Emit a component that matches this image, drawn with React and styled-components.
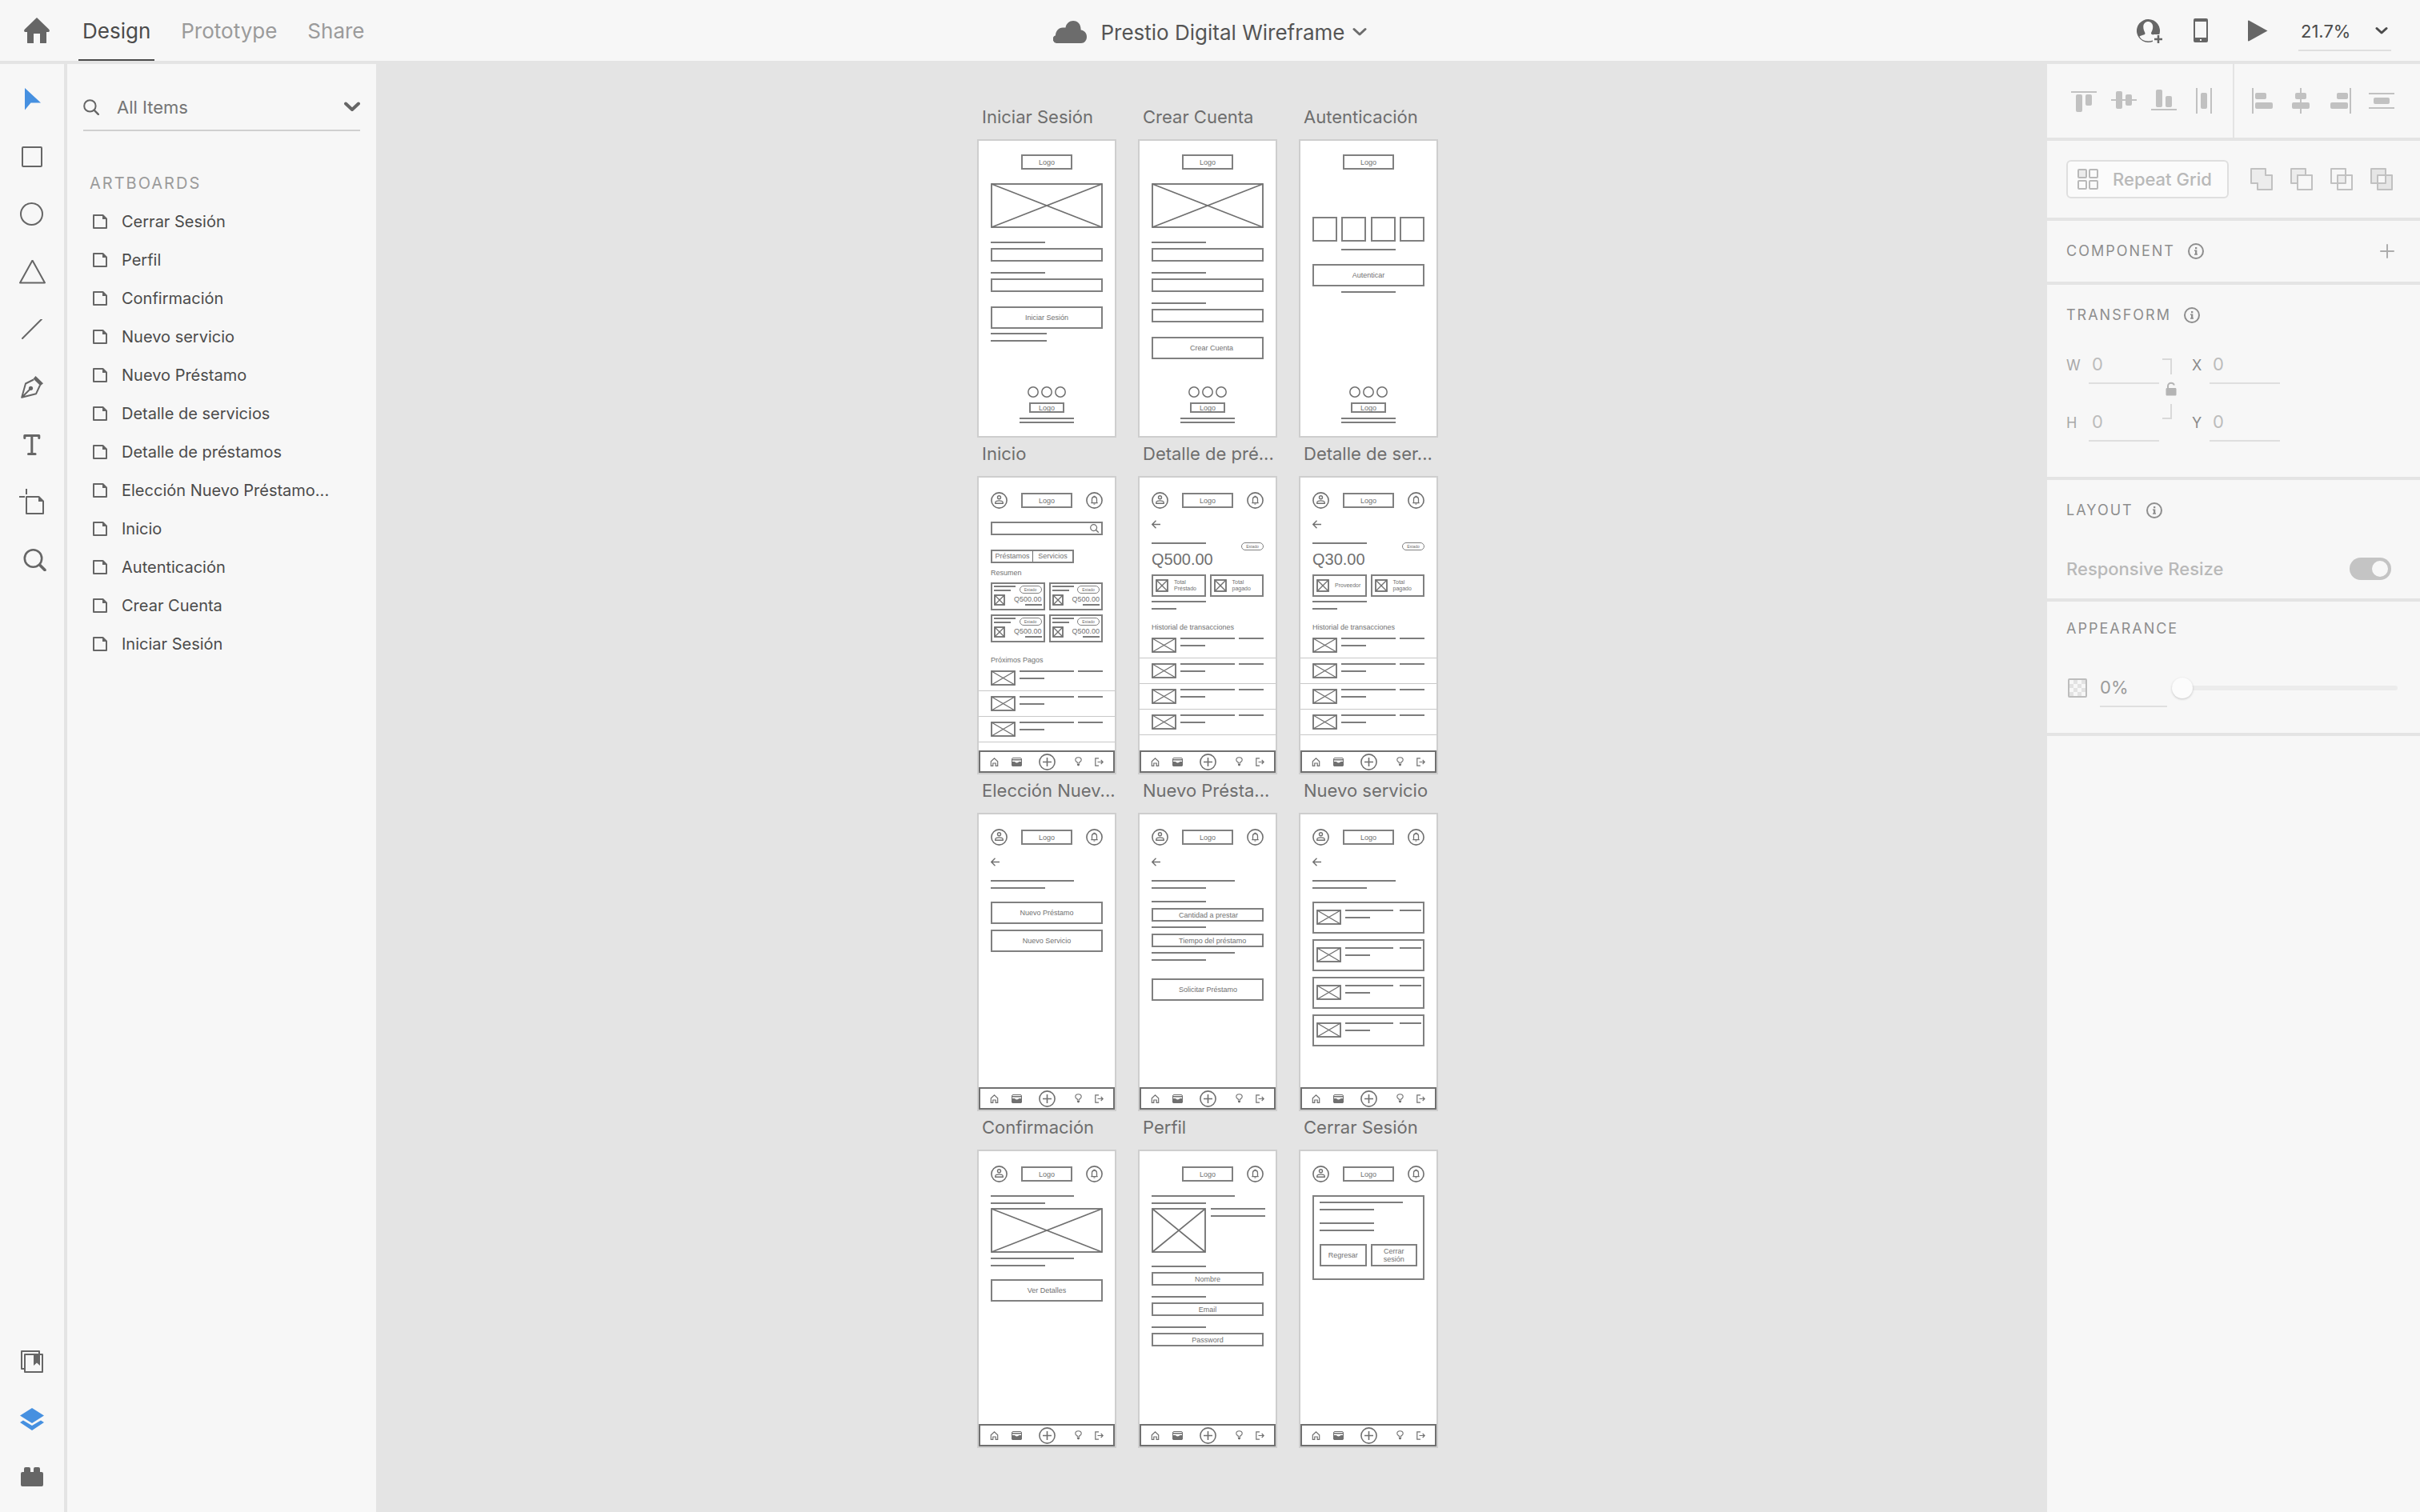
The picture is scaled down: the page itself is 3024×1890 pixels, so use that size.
import React from "react";
import styled, { createGlobalStyle, css } from "styled-components";

const color = {
  panel: "#f7f7f7",
  line: "#e4e4e4",
  icon: "#666666",
  text: "#4b4b4b",
  muted: "#9b9b9b",
  disabled: "#b9b9b9",
  accent: "#4690e0",
  wire: "#707070",
};

const GlobalStyle = createGlobalStyle`
  *, *::before, *::after { box-sizing: border-box; }
  body { margin: 0; background: ${color.line}; }
  #root { font-family: Inter, "Open Sans", sans-serif; color: ${color.text}; }
  button, input { font: inherit; color: inherit; margin: 0; padding: 0; border: 0; background: none; }
  svg { display: block; flex: none; }
  h2, h3, ul, p { margin: 0; padding: 0; font-weight: 400; list-style: none; }
`;

/* ---------- shell ---------- */

const Shell = styled.div`
  display: grid;
  grid-template-rows: 80px 1fr;
  min-height: 100vh;
`;

const TopBar = styled.header`
  display: grid;
  grid-template-columns: 1fr auto 1fr;
  background: ${color.panel};
  border-bottom: 4px solid ${color.line};
`;

const IconButton = styled.button`
  display: flex;
  align-items: center;
  justify-content: center;
  color: ${(p) => p.$tone || color.icon};
`;

const Modes = styled.nav`
  display: flex;
  gap: 28px;
  padding-left: 30px;
  ${IconButton} { margin-right: 8px; }
`;

const ModeTab = styled.a`
  display: flex;
  align-items: center;
  padding: 2px 5px 0;
  font-size: 26px;
  text-decoration: none;
  color: ${(p) => (p.$active ? color.text : color.muted)};
  border-bottom: 2px solid ${(p) => (p.$active ? color.text : "transparent")};
`;

const FileTitle = styled.button`
  display: flex;
  align-items: center;
  padding-top: 4px;
  font-size: 26px;
  color: #555555;
  span { margin: 0 9px 0 17px; }
  svg { color: #6c6c6c; }
`;

const TopActions = styled.div`
  display: flex;
  justify-content: flex-end;
  align-items: center;
  gap: 35px;
  padding-right: 36px;
`;

const ZoomBox = styled.label`
  display: flex;
  align-items: center;
  justify-content: space-between;
  width: 116px;
  height: 50px;
  margin-top: 2px;
  padding: 2px 4px 0 3px;
  border-bottom: 2px solid #dfdfdf;
  input { width: 80px; font-size: 22px; }
`;

const Work = styled.main`
  display: grid;
  grid-template-columns: 84px 386px 1fr 466px;
`;

/* ---------- left side ---------- */

const ToolRail = styled.div`
  display: flex;
  flex-direction: column;
  justify-content: space-between;
  padding: 8px 0;
  background: ${color.panel};
  border-right: 4px solid ${color.line};
`;

const ToolGroup = styled.div`
  display: flex;
  flex-direction: column;
  ${IconButton} { height: 72px; }
`;

const Layers = styled.aside`
  background: ${color.panel};
  padding: 28px 20px;
`;

const SearchBox = styled.label`
  display: flex;
  align-items: center;
  gap: 22px;
  height: 56px;
  padding-bottom: 2px;
  border-bottom: 2px solid #d0d0d0;
  color: ${color.icon};
  input { flex: 1; min-width: 0; font-size: 22px; color: #757575; }
`;

const LayersHeading = styled.h2`
  margin: 53px 8px 12px;
  font-size: 20px;
  line-height: 24px;
  letter-spacing: 2px;
  color: ${color.muted};
`;

const LayerRow = styled.button`
  display: flex;
  align-items: center;
  gap: 18px;
  width: 100%;
  height: 48px;
  padding-left: 12px;
  font-size: 20px;
  white-space: nowrap;
  svg { color: ${color.icon}; }
`;

/* ---------- canvas ---------- */

const Canvas = styled.section`
  display: grid;
  grid-template-columns: repeat(3, 174px);
  grid-auto-rows: 421px;
  align-content: start;
  justify-content: center;
  column-gap: 27px;
  padding: 46px 10px 32px 0;
  background: ${color.line};
`;

const BoardName = styled.h3`
  height: 48px;
  padding-left: 6px;
  font-size: 22px;
  line-height: 40px;
  white-space: nowrap;
  color: #6e6e6e;
`;

const Board = styled.div`
  display: flex;
  flex-direction: column;
  height: 373px;
  border: 2px solid #cecece;
  background: #ffffff;
  font-family: "Liberation Sans", Arial, sans-serif;
  font-size: 9px;
  line-height: 10px;
  color: ${color.wire};
`;

const Body = styled.div`
  display: flex;
  flex-direction: column;
  flex: 1;
  padding: ${(p) => p.$top || 18}px 15px 0;
`;

const outline = css`
  border: 2px solid #808080;
`;

const Rule = styled.div`
  flex: none;
  width: ${(p) => p.$w}px;
  height: 2px;
  margin-top: ${(p) => p.$mt || 0}px;
  background: #7c7c7c;
  align-self: ${(p) => (p.$center ? "center" : "auto")};
`;

const Frame = styled.div`
  ${outline}
  flex: none;
  display: flex;
  align-items: center;
  justify-content: ${(p) => (p.$indent ? "flex-start" : "center")};
  width: ${(p) => (p.$w ? p.$w + "px" : "auto")};
  height: ${(p) => p.$h}px;
  margin-top: ${(p) => p.$mt || 0}px;
  padding-left: ${(p) => p.$indent || 0}px;
  align-self: ${(p) => (p.$w ? "center" : "stretch")};
  text-align: center;
  white-space: nowrap;
`;

const Bar = styled.div`
  display: flex;
  align-items: center;
  justify-content: space-between;
  height: 21px;
`;

const RoundSlot = styled.div`
  width: 21px;
  height: 21px;
`;

const Spread = styled.div`
  display: flex;
  justify-content: space-between;
  align-items: flex-start;
  gap: ${(p) => p.$gap || 0}px;
  margin-top: ${(p) => p.$mt || 0}px;
`;

const Stack = styled.div`
  flex: ${(p) => (p.$grow ? 1 : "none")};
  display: flex;
  flex-direction: column;
  align-items: ${(p) => (p.$end ? "flex-end" : "flex-start")};
`;

const BoardFooter = styled.div`
  display: flex;
  flex-direction: column;
  align-items: center;
  margin-top: auto;
  padding-bottom: 16px;
`;

const Dots = styled.div`
  display: flex;
  gap: 3px;
  margin-bottom: 6px;
`;

const SearchFrame = styled(Frame)`
  justify-content: flex-end;
  padding-right: 3px;
`;

const Segments = styled.div`
  ${outline}
  display: grid;
  grid-template-columns: 50px 1fr;
  width: 104px;
  height: 17px;
  margin-top: 18px;
  line-height: 13px;
  text-align: center;
  span + span { border-left: 1px solid ${color.wire}; }
`;

const Caption = styled.p`
  margin-top: ${(p) => p.$mt}px;
  line-height: 12px;
  white-space: nowrap;
`;

const Cards = styled.div`
  display: grid;
  grid-template-columns: repeat(2, minmax(0, 1fr));
  gap: 5px;
  margin-top: ${(p) => p.$mt}px;
`;

const LoanCard = styled.div`
  ${outline}
  height: 35px;
  padding: 2px 2px 0;
`;

const Pill = styled.span`
  width: 28px;
  height: 10px;
  border: 1px solid #808080;
  border-radius: 5px;
  font-size: 5px;
  line-height: 8px;
  text-align: center;
`;

const FactCard = styled.div`
  ${outline}
  display: flex;
  align-items: center;
  gap: 7px;
  height: 28px;
  padding-left: 3px;
  font-size: 7px;
  line-height: 8px;
`;

const Amount = styled.p`
  margin-top: 1px;
  font-size: ${(p) => (p.$big ? 20 : 9)}px;
  line-height: ${(p) => (p.$big ? 20 : 10)}px;
`;

const Entry = styled.div`
  display: flex;
  gap: 5px;
  margin: 0 -15px 6px;
  padding: 0 15px 6px;
  border-bottom: 1px solid #c8c8c8;
`;

const ServiceCard = styled.div`
  ${outline}
  display: flex;
  gap: 5px;
  height: 40px;
  margin-bottom: 7px;
  padding: 8px 2px 0 3px;
`;

const Dialog = styled.div`
  ${outline}
  height: 106px;
  margin-top: 16px;
  padding: 6px 7px 0;
`;

const DialogButtons = styled.div`
  display: grid;
  grid-template-columns: 1fr 1fr;
  gap: 5px;
  margin-top: 16px;
`;

const BoardNav = styled.div`
  ${outline}
  border-color: #707070;
  display: grid;
  grid-template-columns: 1fr auto 1fr;
  align-items: center;
  height: 28px;
  padding: 0 12px;
`;

const NavPair = styled.div`
  display: flex;
  align-items: center;
  justify-content: ${(p) => (p.$end ? "flex-end" : "flex-start")};
  gap: 16px;
`;

/* ---------- right side ---------- */

const Inspector = styled.aside`
  background: ${color.panel};
`;

const Section = styled.section`
  height: ${(p) => p.$h}px;
  padding: 0 28px 0 24px;
  border-bottom: 4px solid ${color.line};
`;

const AlignRow = styled.div`
  display: flex;
  height: 96px;
  border-bottom: 4px solid ${color.line};
`;

const AlignGroup = styled.div`
  display: flex;
  align-items: center;
  gap: 18px;
  padding: 0 ${(p) => (p.$first ? 20 : 32)}px 0 ${(p) => (p.$first ? 30 : 18)}px;
  border-right: ${(p) => (p.$first ? `2px solid ${color.line}` : "0")};
`;

const GridRow = styled.div`
  display: flex;
  align-items: center;
  height: 96px;
`;

const RepeatButton = styled.button`
  display: flex;
  align-items: center;
  gap: 18px;
  width: 203px;
  height: 48px;
  margin-right: 27px;
  padding-left: 12px;
  border: 2px solid #dfdfdf;
  border-radius: 6px;
  background: #fbfbfb;
  font-size: 22px;
  font-weight: 500;
  white-space: nowrap;
  color: ${color.disabled};
`;

const BooleanGroup = styled.div`
  display: flex;
  gap: 22px;
`;

const SectionHead = styled.div`
  display: flex;
  align-items: center;
  gap: 16px;
  height: ${(p) => p.$h || 76}px;
  color: #8e8e8e;
  h2 { font-size: 18px; line-height: 24px; letter-spacing: 2px; }
  ${IconButton} { margin-left: auto; }
`;

const TransformGrid = styled.div`
  display: grid;
  grid-template-columns: 116px 41px 1fr;
  grid-template-rows: 72px 72px;
`;

const Field = styled.label`
  display: grid;
  grid-template-columns: ${(p) => (p.$narrow ? 22 : 28)}px 88px;
  align-items: center;
  align-content: start;
  font-size: 18px;
  color: ${(p) => (p.$narrow ? "#8a8a8a" : "#a8a8a8")};
  input {
    width: 88px;
    height: 48px;
    padding-left: 4px;
    font-size: 22px;
    color: #bcbcbc;
    border-bottom: 2px solid #dfdfdf;
  }
`;

const LockCell = styled.div`
  grid-row: 1 / 3;
  grid-column: 2;
  padding: 16px 0 0 4px;
`;

const SwitchRow = styled.label`
  display: flex;
  align-items: center;
  justify-content: space-between;
  height: 70px;
  padding-right: 8px;
  font-size: 22px;
  font-weight: 500;
  color: ${color.disabled};
`;

const Switch = styled.input`
  appearance: none;
  display: flex;
  justify-content: flex-end;
  width: 52px;
  height: 28px;
  padding: 4px;
  border-radius: 14px;
  background: #c4c4c4;
  &::before {
    content: "";
    width: 20px;
    height: 20px;
    border-radius: 50%;
    background: ${color.panel};
  }
`;

const OpacityRow = styled.div`
  display: flex;
  align-items: center;
  margin-top: 16px;
  padding-left: 2px;
`;

const OpacityInput = styled.input`
  width: 84px;
  height: 48px;
  margin: 0 6px 0 16px;
  font-size: 22px;
  color: ${color.muted};
  border-bottom: 2px solid #dfdfdf;
`;

const Slider = styled.input`
  appearance: none;
  flex: 1;
  min-width: 0;
  height: 26px;
  &::-webkit-slider-runnable-track {
    height: 6px;
    border-radius: 3px;
    background: #ececec;
  }
  &::-webkit-slider-thumb {
    appearance: none;
    width: 26px;
    height: 26px;
    margin-top: -10px;
    border-radius: 50%;
    background: #fcfcfc;
    box-shadow: 0 1px 3px rgba(0, 0, 0, 0.2);
  }
`;

/* ---------- icons ---------- */

const Svg = ({ w, h = w, children, ...rest }) => (
  <svg width={w} height={h} viewBox={`0 0 ${w} ${h}`} fill="none" aria-hidden="true" {...rest}>
    {children}
  </svg>
);

const stroke = (width = 2) => ({ stroke: "currentColor", strokeWidth: width });

const HomeIcon = () => (
  <Svg w={32}>
    <path fill="currentColor" d="M16 0 1 14.500c-1.500 1.700-1 3.500.5 3.500H4v13c0 1 .5 1.500 1.300 1.500H12V20h8v12.500h6.700c.8 0 1.300-.5 1.300-1.500V18h2.500c1.500 0 2-1.800.5-3.500Z" />
  </Svg>
);

const CloudIcon = () => (
  <Svg w={42} h={28}>
    <path fill="currentColor" d="M5 28a5 5 0 0 1-2-9.700C3 13 7 8 13 8.500h2.500C16.500 3 20.500 0 25 0c6 0 9.500 4 9.700 11.500C39 12 42 15.500 42 20c0 4.500-3 8-7 8Z" />
  </Svg>
);

const Chevron = ({ w, width = 3 }) => (
  <Svg w={w} h={w / 2 + 4}>
    <path {...stroke(width)} strokeLinecap="round" strokeLinejoin="round" d={`M2 2.500 ${w / 2} ${w / 2}l${w / 2 - 2}-${w / 2 - 2.5}`} />
  </Svg>
);

const InviteIcon = () => (
  <Svg w={32}>
    <path fill="currentColor" fillRule="evenodd" d="M14.500 2A14.500 14.500 0 1 0 20 29.900V28.600C12 31 5.500 28 3.500 23.500c2.500-1.800 6.500-1.500 7-3.500.3-1.400-2.200-3.500-2.200-8.500C8.300 7.500 11 5 14.200 5s6 2.500 6 6.500c0 5-2.500 7-2.200 8.500.2.900 1.600 1.200 3 1.600V21h7.300A14.500 14.500 0 0 0 14.500 2Z" />
    <path {...stroke(2.5)} d="M27 22v10M22 27h10" />
  </Svg>
);

const PhoneIcon = () => (
  <Svg w={33} h={32}>
    <path fill="currentColor" fillRule="evenodd" d="M6 1h14a2 2 0 0 1 2 2v26a2 2 0 0 1-2 2H6a2 2 0 0 1-2-2V3a2 2 0 0 1 2-2Zm0 4v20h14V5Zm6 22v2h2v-2Z" />
  </Svg>
);

const PlayIcon = () => (
  <Svg w={32}>
    <path fill="currentColor" d="M4 4.500c0-.8.8-1.200 1.500-.8L28.500 16.500 5.500 29.300c-.7.400-1.500 0-1.500-.8Z" />
  </Svg>
);

const SearchIcon = ({ w = 20, width = 2 }) => (
  <Svg w={w}>
    <circle {...stroke(width)} cx={w * 0.42} cy={w * 0.42} r={w * 0.36} />
    <path {...stroke(width * 1.2)} strokeLinecap="round" d={`M${w * 0.68} ${w * 0.68} ${w * 0.94} ${w * 0.94}`} />
  </Svg>
);

const DocIcon = () => (
  <Svg w={18}>
    <path {...stroke(2)} strokeLinejoin="round" d="M1 1h11.500L17 5.500V17H1Z" />
    <path fill="currentColor" d="M12 1v5h5.500Z" />
  </Svg>
);

const tools = [
  ["Select", <Svg w={34} h={28}><path fill="#4690e0" d="M8 0v27.500l7.500-9H28Z" /></Svg>],
  ["Rectangle", <Svg w={26}><rect {...stroke()} x="1" y="1" width="24" height="24" rx="1" /></Svg>],
  ["Ellipse", <Svg w={30}><circle {...stroke()} cx="14.500" cy="14.500" r="13.500" /></Svg>],
  ["Polygon", <Svg w={34} h={30}><path {...stroke()} strokeLinejoin="round" d="M17.500.500 33 28.500H2Z" /></Svg>],
  ["Line", <Svg w={26}><path {...stroke()} strokeLinecap="round" d="m1 24 24-24" /></Svg>],
  [
    "Pen",
    <Svg w={28}>
      <path {...stroke()} strokeLinejoin="round" d="M16 4.500 6 9.500 1.200 26.800 19 22.300 24 11.500M1.500 26.500l11-11" />
      <path fill="currentColor" d="m18.500 0 9.500 9.300-3.500 3-9-8.800Z" />
      <circle fill="currentColor" cx="12.500" cy="15.300" r="2.600" />
    </Svg>,
  ],
  ["Text", <Svg w={22} h={26}><path {...stroke(3)} strokeLinecap="round" strokeLinejoin="round" d="M1.800 4.500V1.500h18v3M10.800 1.500v23M6.500 24.500h8.600" /></Svg>],
  [
    "Artboard",
    <Svg w={34} h={34}>
      <path {...stroke()} strokeLinejoin="round" d="M10 10h15.500l5.500 5.500V31H10Z" />
      <path fill="currentColor" d="M25 10v6h6.500Z" />
      <path {...stroke()} d="M10 0v7M1 10h7" />
    </Svg>,
  ],
  ["Zoom", <Svg w={36} h={28}><circle {...stroke(2.6)} cx="19.500" cy="12" r="10.700" /><path {...stroke(3.6)} strokeLinecap="round" d="m28 20.500 6 6" /></Svg>],
];

const railPanels = [
  [
    "Libraries",
    <Svg w={28}>
      <path {...stroke()} strokeLinejoin="round" d="M5 23H1V1h22v4M5 5h22v22H5Z" />
      <path fill="currentColor" d="M16 5h8v14l-4-3.500-4 3.500Z" />
    </Svg>,
  ],
  ["Layers", <Svg w={30} h={28}><path fill="#4690e0" d="M15 0 0 9.500 15 19l15-9.500ZM4 15.500 0 18l15 10 15-10-4-2.500-11 6.500Z" /></Svg>],
  ["Plugins", <Svg w={28} h={24}><path fill="currentColor" d="M2 6h2V2a2 2 0 0 1 2-2h4a2 2 0 0 1 2 2v4h4V2a2 2 0 0 1 2-2h4a2 2 0 0 1 2 2v4h2a2 2 0 0 1 2 2v14a2 2 0 0 1-2 2H2a2 2 0 0 1-2-2V8a2 2 0 0 1 2-2Z" /></Svg>],
];

const alignments = {
  vertical: [
    ["Align top", [[0, 4, 32, 2], [6, 8, 8, 22], [18, 8, 8, 14]]],
    ["Align middle", [[0, 14, 32, 2], [6, 4, 8, 22], [18, 8, 8, 14]]],
    ["Align bottom", [[0, 26, 32, 2], [6, 2, 8, 22], [18, 10, 8, 14]]],
    ["Distribute horizontally", [[6, 0, 2, 32], [24, 0, 2, 32], [12, 6, 8, 20]]],
  ],
  horizontal: [
    ["Align left", [[4, 0, 2, 32], [8, 6, 14, 8], [8, 18, 22, 8]]],
    ["Align center", [[14, 0, 2, 32], [8, 6, 14, 8], [4, 18, 22, 8]]],
    ["Align right", [[26, 0, 2, 32], [10, 6, 14, 8], [2, 18, 22, 8]]],
    ["Distribute vertically", [[0, 6, 32, 2], [0, 24, 32, 2], [6, 12, 20, 8]]],
  ],
};

const AlignIcon = ({ bars }) => (
  <Svg w={32}>
    {bars.map(([x, y, width, height]) => (
      <rect key={`${x}-${y}`} fill="currentColor" x={x} y={y} width={width} height={height} rx={Math.min(width, height) > 2 ? 2 : 0} />
    ))}
  </Svg>
);

const booleans = [
  ["Add", <Svg w={28}><path {...stroke()} fill="#ececec" strokeLinejoin="round" d="M1 1h18v8h8v18H9v-8H1Z" /></Svg>],
  ["Subtract", <Svg w={28}><path {...stroke()} fill="#ececec" strokeLinejoin="round" d="M1 1h18v8H9v10H1Z" /><path {...stroke()} strokeLinejoin="round" d="M9 9h18v18H9Z" /></Svg>],
  ["Intersect", <Svg w={28}><path {...stroke()} strokeLinejoin="round" d="M1 1h18v18H1ZM9 9h18v18H9Z" /><path fill="#ececec" d="M10 10h8v8h-8Z" /></Svg>],
  ["Exclude overlap", <Svg w={28}><path {...stroke()} fill="#e6e6e6" fillRule="evenodd" strokeLinejoin="round" d="M1 1h18v18H1ZM9 9h18v18H9Z" /></Svg>],
];

const GridIcon = () => (
  <Svg w={26}>
    <rect {...stroke()} fill="#ececec" x="1" y="1" width="10" height="10" rx="1" />
    <rect {...stroke()} x="15" y="1" width="10" height="10" rx="1" />
    <rect {...stroke()} x="1" y="15" width="10" height="10" rx="1" />
    <rect {...stroke()} x="15" y="15" width="10" height="10" rx="1" />
  </Svg>
);

const InfoIcon = () => (
  <Svg w={20}>
    <circle {...stroke()} cx="10" cy="10" r="9" />
    <path fill="currentColor" d="M9 5h2.300v2.200H9ZM8 8.500h3.300v4.700H12v1.500H8v-1.500h1V10H8Z" />
  </Svg>
);

const PlusIcon = () => (
  <Svg w={26}><path {...stroke()} strokeLinecap="round" d="M13 5v16M5 13h16" /></Svg>
);

const LinkLockIcon = () => (
  <Svg w={20} h={80}>
    <path stroke="#d9d9d9" strokeWidth="2" d="M0 1h11v19M0 75h11V57" />
    <path fill="#b4b4b4" d="M6 37h10c1 0 1.500.5 1.500 1.500V45c0 1-.5 1.500-1.500 1.500H6c-1 0-1.500-.5-1.500-1.500v-6.500C4.500 37.500 5 37 6 37Z" />
    <path stroke="#b4b4b4" strokeWidth="2" d="M7 37v-2.500c0-2 1.500-3.800 4-3.800 2 0 3.500 1 3.700 2.800" />
  </Svg>
);

const CheckerIcon = () => (
  <Svg w={24}>
    {[0, 1, 2, 3].map((r) =>
      [0, 1, 2, 3].map((c) => (r + c) % 2 === 1 && <rect key={`${r}${c}`} fill="#e2e2e2" x={2 + c * 5} y={2 + r * 5} width="5" height="5" />)
    )}
    <rect stroke="#bdbdbd" strokeWidth="2" x="1" y="1" width="22" height="22" rx="1" />
  </Svg>
);

const UserBadge = () => (
  <Svg w={21}>
    <circle {...stroke(1.6)} cx="10.500" cy="10.500" r="9.600" />
    <circle {...stroke(1.4)} cx="10.500" cy="6.800" r="2" />
    <path {...stroke(1.4)} d="M5.800 14.300v-1.200c0-1.300 2.700-2.200 4.700-2.200s4.700.9 4.700 2.200v1.200Z" />
  </Svg>
);

const BellBadge = () => (
  <Svg w={21}>
    <circle {...stroke(1.6)} cx="10.500" cy="10.500" r="9.600" />
    <path {...stroke(1.3)} d="M7.500 13.500V9.300c0-2 1.200-3.300 3-3.300s3 1.300 3 3.300v4.200M6.300 13.700h8.400" />
    <path fill="currentColor" d="M9.500 4.800h2v1.500h-2ZM9.300 14.500h2.400c0 1.600-2.400 1.600-2.400 0Z" />
  </Svg>
);

const Dot = () => (
  <Svg w={14}><circle {...stroke(1.5)} cx="7" cy="7" r="6.200" /></Svg>
);

const BackArrow = () => (
  <Svg w={11}><path {...stroke(1.4)} d="M11 5.500H1M5.500.8.8 5.500l4.700 4.700" /></Svg>
);

/* Image placeholder: an outlined box with both diagonals. */
const Crossed = ({ w, h }) => (
  <Svg w={w} h={h}>
    <path {...stroke(w > 60 ? 1.7 : 1.4)} d={`M1 1 ${w - 1} ${h - 1}M${w - 1} 1 1 ${h - 1}`} />
    <rect {...stroke(1.8)} x="1" y="1" width={w - 2} height={h - 2} />
  </Svg>
);

const NavHome = () => (
  <Svg w={11}><path {...stroke(1.2)} d="M1.300 4.800 5.500.9l4.200 3.900v5.600H7.200V7H3.800v3.400H1.300Z" /></Svg>
);
const NavCards = () => (
  <Svg w={13} h={11}>
    <rect {...stroke(1)} x=".5" y=".5" width="12" height="10" rx="1.500" />
    <path fill="currentColor" d="M0 2h13v1.600H0ZM0 5h3.500c1 0 1.500 1.500 3 1.500s2-1 3-1.500H13V9.500L12 11H1L0 9.500Z" />
  </Svg>
);
const NavPlus = () => (
  <Svg w={21}><circle {...stroke(1.6)} cx="10.500" cy="10.500" r="9.600" /><path {...stroke(1.6)} d="M10.500 5v11M5 10.500h11" /></Svg>
);
const NavBulb = () => (
  <Svg w={9} h={12}><path {...stroke(1.1)} d="M3.200 8V6.800C1.500 6 .8 5.200.8 3.900.8 2 2.400.7 4.500.7s3.700 1.300 3.700 3.200c0 1.300-.7 2.100-2.400 2.900V8Z" /><path fill="currentColor" d="M3 9h3v1.500L4.500 11.500 3 10.500Z" /></Svg>
);
const NavExit = () => (
  <Svg w={11}><path {...stroke(1.2)} d="M5 .8H.8v9.400H5M3.500 5.500h6.700M7.700 3l2.500 2.500L7.700 8" /></Svg>
);

/* ---------- artboard parts ---------- */

const Header = ({ user = true }) => (
  <Bar>
    <RoundSlot>{user && <UserBadge />}</RoundSlot>
    <Frame $w={64} $h={19}>Logo</Frame>
    <RoundSlot><BellBadge /></RoundSlot>
  </Bar>
);

const BottomNav = () => (
  <BoardNav>
    <NavPair><NavHome /><NavCards /></NavPair>
    <NavPlus />
    <NavPair $end><NavBulb /><NavExit /></NavPair>
  </BoardNav>
);

const Brand = () => (
  <BoardFooter>
    <Dots><Dot /><Dot /><Dot /></Dots>
    <Frame $w={44} $h={13}>Logo</Frame>
    <Rule $w={68} $mt={6} $center />
    <Rule $w={68} $mt={3} $center />
  </BoardFooter>
);

const InputGroup = ({ mt, text }) => (
  <>
    <Rule $w={68} $mt={mt} />
    <Frame $h={17} $mt={6}>{text}</Frame>
  </>
);

const TitleLines = ({ mt }) => (
  <>
    <Rule $w={104} $mt={mt} />
    <Rule $w={68} $mt={7} />
  </>
);

const Entries = ({ count }) =>
  Array.from({ length: count }, (_, i) => (
    <Entry key={i}>
      <Crossed w={31} h={19} />
      <Stack>
        <Rule $w={68} />
        <Rule $w={31} $mt={7} />
      </Stack>
      <Rule $w={31} />
    </Entry>
  ));

const Loan = () => (
  <LoanCard>
    <Spread>
      <Stack>
        <Rule $w={27} />
        <Rule $w={21} $mt={3} />
      </Stack>
      <Pill>Estado</Pill>
    </Spread>
    <Spread $mt={1}>
      <Crossed w={14} h={14} />
      <Stack $end>
        <Amount>Q500.00</Amount>
        <Rule $w={21} $mt={1} />
      </Stack>
    </Spread>
  </LoanCard>
);

const Detail = ({ amount, first }) => (
  <>
    <Body>
      <Header />
      <Spread $mt={14}><BackArrow /></Spread>
      <Spread $mt={17}>
        <Rule $w={68} />
        <Pill>Estado</Pill>
      </Spread>
      <Amount $big>{amount}</Amount>
      <Cards $mt={9}>
        <FactCard><Crossed w={16} h={16} /><span>{first}</span></FactCard>
        <FactCard><Crossed w={16} h={16} /><span>Total<br />pagado</span></FactCard>
      </Cards>
      <Rule $w={68} $mt={5} />
      <Rule $w={31} $mt={7} />
      <Caption $mt={16}>Historial de transacciones</Caption>
      <Spread $mt={7} />
      <Entries count={4} />
    </Body>
    <BottomNav />
  </>
);

const boards = [
  ["Iniciar Sesión", (
    <Body $top={17}>
      <Frame $w={64} $h={19}>Logo</Frame>
      <Spread $mt={17}><Crossed w={140} h={56} /></Spread>
      <InputGroup mt={17} />
      <InputGroup mt={13} />
      <Frame $h={28} $mt={18}>Iniciar Sesión</Frame>
      <Rule $w={70} $mt={5} />
      <Rule $w={70} $mt={7} />
      <Brand />
    </Body>
  )],
  ["Crear Cuenta", (
    <Body $top={17}>
      <Frame $w={64} $h={19}>Logo</Frame>
      <Spread $mt={17}><Crossed w={140} h={56} /></Spread>
      <InputGroup mt={17} />
      <InputGroup mt={13} />
      <InputGroup mt={13} />
      <Frame $h={28} $mt={18} $indent={46}>Crear Cuenta</Frame>
      <Brand />
    </Body>
  )],
  ["Autenticación", (
    <Body $top={17}>
      <Frame $w={64} $h={19}>Logo</Frame>
      <Spread $mt={59}>
        <Frame $w={31} $h={31} /><Frame $w={31} $h={31} /><Frame $w={31} $h={31} /><Frame $w={31} $h={31} />
      </Spread>
      <Rule $w={68} $mt={9} $center />
      <Frame $h={28} $mt={17}>Autenticar</Frame>
      <Rule $w={68} $mt={6} $center />
      <Brand />
    </Body>
  )],
  ["Inicio", (
    <>
      <Body>
        <Header />
        <SearchFrame $h={17} $mt={16}><SearchIcon w={11} width={1.2} /></SearchFrame>
        <Segments><span>Préstamos</span><span>Servicios</span></Segments>
        <Caption $mt={6}>Resumen</Caption>
        <Cards $mt={6}><Loan /><Loan /><Loan /><Loan /></Cards>
        <Caption $mt={16}>Próximos Pagos</Caption>
        <Spread $mt={7} />
        <Entries count={3} />
      </Body>
      <BottomNav />
    </>
  )],
  ["Detalle de pré...", <Detail amount="Q500.00" first={<>Total<br />Préstado</>} />],
  ["Detalle de ser...", <Detail amount="Q30.00" first="Proveedor" />],
  ["Elección Nuev...", (
    <>
      <Body>
        <Header />
        <Spread $mt={15}><BackArrow /></Spread>
        <TitleLines mt={17} />
        <Frame $h={28} $mt={16}>Nuevo Préstamo</Frame>
        <Frame $h={28} $mt={7}>Nuevo Servicio</Frame>
      </Body>
      <BottomNav />
    </>
  )],
  ["Nuevo Présta...", (
    <>
      <Body>
        <Header />
        <Spread $mt={15}><BackArrow /></Spread>
        <TitleLines mt={17} />
        <Rule $w={68} $mt={15} />
        <Frame $h={17} $mt={7} $indent={32}>Cantidad a prestar</Frame>
        <Rule $w={68} $mt={6} />
        <Frame $h={17} $mt={7} $indent={32}>Tiempo del préstamo</Frame>
        <TitleLines mt={6} />
        <Frame $h={28} $mt={22} $indent={32}>Solicitar Préstamo</Frame>
      </Body>
      <BottomNav />
    </>
  )],
  ["Nuevo servicio", (
    <>
      <Body>
        <Header />
        <Spread $mt={15}><BackArrow /></Spread>
        <TitleLines mt={17} />
        <Spread $mt={16} />
        {[0, 1, 2, 3].map((i) => (
          <ServiceCard key={i}>
            <Crossed w={31} h={19} />
            <Stack $grow>
              <Rule $w={60} />
              <Rule $w={31} $mt={7} />
            </Stack>
            <Rule $w={27} />
          </ServiceCard>
        ))}
      </Body>
      <BottomNav />
    </>
  )],
  ["Confirmación", (
    <>
      <Body>
        <Header />
        <TitleLines mt={16} />
        <Spread $mt={5}><Crossed w={140} h={56} /></Spread>
        <TitleLines mt={6} />
        <Frame $h={28} $mt={16}>Ver Detalles</Frame>
      </Body>
      <BottomNav />
    </>
  )],
  ["Perfil", (
    <>
      <Body>
        <Header user={false} />
        <TitleLines mt={16} />
        <Spread $mt={5} $gap={6}>
          <Crossed w={68} h={56} />
          <Stack>
            <Rule $w={68} />
            <Rule $w={68} $mt={7} />
          </Stack>
        </Spread>
        <InputGroup mt={16} text="Nombre" />
        <InputGroup mt={13} text="Email" />
        <InputGroup mt={13} text="Password" />
      </Body>
      <BottomNav />
    </>
  )],
  ["Cerrar Sesión", (
    <>
      <Body>
        <Header />
        <Dialog>
          <TitleLines mt={0} />
          <Rule $w={68} $mt={15} />
          <Rule $w={68} $mt={7} />
          <DialogButtons>
            <Frame $h={28}>Regresar</Frame>
            <Frame $h={28}>Cerrar<br />sesión</Frame>
          </DialogButtons>
        </Dialog>
      </Body>
      <BottomNav />
    </>
  )],
];

const layers = [
  "Cerrar Sesión",
  "Perfil",
  "Confirmación",
  "Nuevo servicio",
  "Nuevo Préstamo",
  "Detalle de servicios",
  "Detalle de préstamos",
  "Elección Nuevo Préstamo...",
  "Inicio",
  "Autenticación",
  "Crear Cuenta",
  "Iniciar Sesión",
];

const TransformField = ({ name, narrow }) => (
  <Field $narrow={narrow}>
    <span>{name}</span>
    <input defaultValue="0" />
  </Field>
);

const Rail = ({ items }) => (
  <ToolGroup>
    {items.map(([name, icon]) => (
      <IconButton key={name} aria-label={name}>{icon}</IconButton>
    ))}
  </ToolGroup>
);

export default function App() {
  return (
    <Shell>
      <GlobalStyle />
      <TopBar>
        <Modes>
          <IconButton aria-label="Home"><HomeIcon /></IconButton>
          <ModeTab href="#design" $active>Design</ModeTab>
          <ModeTab href="#prototype">Prototype</ModeTab>
          <ModeTab href="#share">Share</ModeTab>
        </Modes>
        <FileTitle>
          <CloudIcon />
          <span>Prestio Digital Wireframe</span>
          <Chevron w={18} width={3} />
        </FileTitle>
        <TopActions>
          <IconButton aria-label="Invite"><InviteIcon /></IconButton>
          <IconButton aria-label="Device preview"><PhoneIcon /></IconButton>
          <IconButton aria-label="Play"><PlayIcon /></IconButton>
          <ZoomBox>
            <input defaultValue="21.7%" aria-label="Zoom level" />
            <Chevron w={16} width={3} />
          </ZoomBox>
        </TopActions>
      </TopBar>

      <Work>
        <ToolRail>
          <Rail items={tools} />
          <Rail items={railPanels} />
        </ToolRail>

        <Layers>
          <SearchBox>
            <SearchIcon />
            <input defaultValue="All Items" aria-label="Filter layers" />
            <Chevron w={20} width={4} />
          </SearchBox>
          <LayersHeading>ARTBOARDS</LayersHeading>
          <ul>
            {layers.map((name) => (
              <li key={name}><LayerRow><DocIcon />{name}</LayerRow></li>
            ))}
          </ul>
        </Layers>

        <Canvas>
          {boards.map(([name, content]) => (
            <article key={name}>
              <BoardName>{name}</BoardName>
              <Board>{content}</Board>
            </article>
          ))}
        </Canvas>

        <Inspector>
          <AlignRow>
            <AlignGroup $first>
              {alignments.vertical.map(([name, bars]) => (
                <IconButton key={name} aria-label={name} $tone="#c1c1c1"><AlignIcon bars={bars} /></IconButton>
              ))}
            </AlignGroup>
            <AlignGroup>
              {alignments.horizontal.map(([name, bars]) => (
                <IconButton key={name} aria-label={name} $tone="#c1c1c1"><AlignIcon bars={bars} /></IconButton>
              ))}
            </AlignGroup>
          </AlignRow>

          <Section $h={100}>
            <GridRow>
              <RepeatButton><GridIcon />Repeat Grid</RepeatButton>
              <BooleanGroup>
                {booleans.map(([name, icon]) => (
                  <IconButton key={name} aria-label={name} $tone="#c1c1c1">{icon}</IconButton>
                ))}
              </BooleanGroup>
            </GridRow>
          </Section>

          <Section $h={80}>
            <SectionHead>
              <h2>COMPONENT</h2>
              <InfoIcon />
              <IconButton aria-label="Make component" $tone="#adadad"><PlusIcon /></IconButton>
            </SectionHead>
          </Section>

          <Section $h={244}>
            <SectionHead><h2>TRANSFORM</h2><InfoIcon /></SectionHead>
            <TransformGrid>
              <TransformField name="W" />
              <LockCell><LinkLockIcon /></LockCell>
              <TransformField name="X" narrow />
              <TransformField name="H" />
              <TransformField name="Y" narrow />
            </TransformGrid>
          </Section>

          <Section $h={152}>
            <SectionHead><h2>LAYOUT</h2><InfoIcon /></SectionHead>
            <SwitchRow>
              Responsive Resize
              <Switch type="checkbox" defaultChecked />
            </SwitchRow>
          </Section>

          <Section $h={168}>
            <SectionHead $h={68}><h2>APPEARANCE</h2></SectionHead>
            <OpacityRow>
              <CheckerIcon />
              <OpacityInput defaultValue="0%" aria-label="Opacity value" />
              <Slider type="range" min="0" max="100" defaultValue="0" aria-label="Opacity" />
            </OpacityRow>
          </Section>
        </Inspector>
      </Work>
    </Shell>
  );
}
